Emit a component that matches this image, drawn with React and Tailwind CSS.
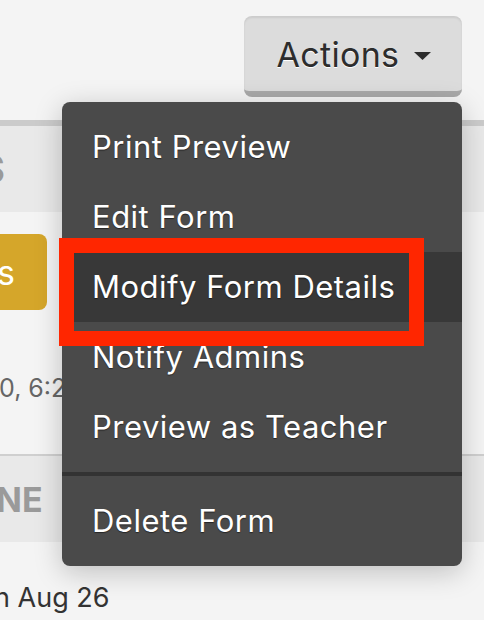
import React from 'react';

const menuItems = ['Print Preview', 'Edit Form', 'Modify Form Details', 'Notify Admins', 'Preview as Teacher'];

const ActionsMenu = ({ active = 'Modify Form Details' }) => (
  <div className="absolute left-[62px] top-[102px] w-[400px] rounded-[8px] bg-[#4a4a4a] py-[10px] shadow-[0_6px_28px_rgba(0,0,0,0.22)]">
    {menuItems.map((item) => (
      <div
        key={item}
        className={`flex h-[70px] items-center pl-[30px] text-[31px] tracking-[0.5px] text-white [text-shadow:0_1px_1px_rgba(0,0,0,0.5)] ${
          item === active ? 'bg-[#383838]' : ''
        }`}
      >
        {item}
      </div>
    ))}
    {/* divider */}
    <div className="my-[10px] h-[4px] bg-[#333333]" />
    <div className="flex h-[70px] items-center pl-[30px] text-[31px] tracking-[0.5px] text-white [text-shadow:0_1px_1px_rgba(0,0,0,0.5)]">
      Delete Form
    </div>
  </div>
);

export default function App() {
  return (
    <div
      className="relative h-[620px] w-[484px] overflow-hidden bg-[#f4f4f4]"
      style={{ fontFamily: 'Inter, "Noto Sans", sans-serif' }}
    >
      {/* Header with actions button */}
      <div className="flex h-[120px] justify-end pr-[22px] pt-[16px]">
        <button className="flex h-[81px] w-[218px] items-center justify-center gap-[15px] rounded-[8px] border-b-[6px] border-[#a9a9a9] bg-[#dcdcdc] pl-[2px] pt-[2px] text-[34px] tracking-[0.3px] text-[#2d2d2d] shadow-[inset_0_2px_2px_rgba(0,0,0,0.08)] [text-shadow:0_1px_0_#fff]">
          <span>Actions</span>
          <svg width="17" height="8" viewBox="0 0 17 8" className="mt-[2px]">
            <path d="M0 0 H17 L8.5 8 Z" fill="#2d2d2d" />
          </svg>
        </button>
      </div>

      {/* Section header */}
      <div className="h-[6px] bg-[#cbcbcb]" />
      <div className="flex h-[86px] items-center bg-[#e9e9e9]">
        <span className="-ml-[20px] text-[38px] font-bold text-[#9a9a9a]">S</span>
      </div>

      {/* Content */}
      <div className="h-[242px] pt-[22px]">
        <div className="flex h-[76px] w-[47px] items-center justify-end rounded-r-[8px] bg-[#d5a62a] pr-[32px] text-[34px] text-white">
          s
        </div>
        <div className="mt-[60px] -ml-[1px] text-[25px] text-[#666666]">0, 6:2</div>
      </div>

      <div className="h-[2px] bg-[#cfcfcf]" />
      <div className="flex h-[86px] items-center bg-[#e9e9e9]">
        <span className="-ml-[4px] text-[34px] font-bold text-[#9a9a9a]">NE</span>
      </div>
      <div className="pt-[36px] -ml-[6px] text-[27px] text-[#333333]">n Aug 26</div>

      <ActionsMenu />

      {/* annotation highlight */}
      <div className="absolute left-[59px] top-[238px] h-[108px] w-[365px] border-[15px] border-[#ff2600]" />
    </div>
  );
}
